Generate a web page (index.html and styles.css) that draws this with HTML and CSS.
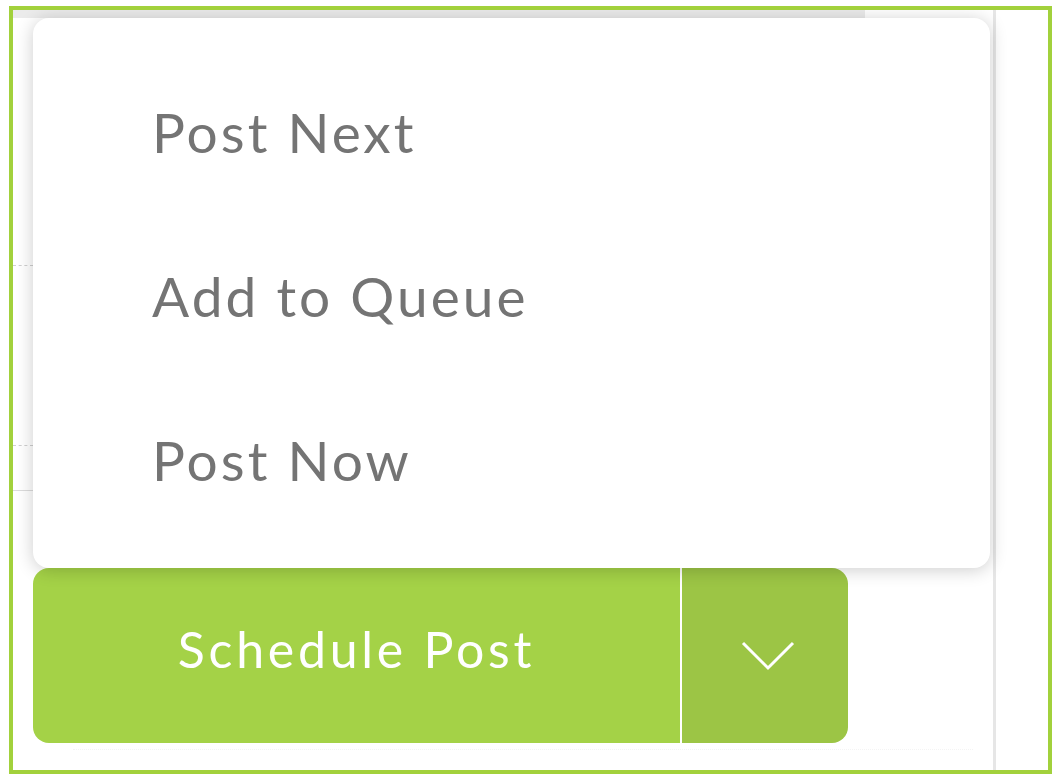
FILE: index.html
```html
<!DOCTYPE html>
<html>
<head>
<meta name="viewport" content="width=device-width, initial-scale=1">
<title>Schedule Post</title>
<link rel="stylesheet" href="styles.css">
</head>
<body>
<div class="frame">
  <div class="stage">
    <div class="panel">
      <div class="top-strip"></div>
      <div class="rule dashed rule-1"></div>
      <div class="rule dashed rule-2"></div>
      <div class="rule solid rule-3"></div>
    </div>

    <div class="split-button">
      <button type="button" class="main-action">Schedule Post</button>
      <button type="button" class="toggle" aria-label="More options">
        <svg width="54" height="30" viewBox="0 0 54 30">
          <polyline points="2,2 27,27 52,2" fill="none" stroke="#ffffff" stroke-width="3"/>
        </svg>
      </button>
    </div>
    <div class="dotted-row"></div>

    <ul class="menu">
      <li>Post Next</li>
      <li>Add to Queue</li>
      <li>Post Now</li>
    </ul>
  </div>
</div>
</body>
</html>
```

FILE: styles.css
```css
body {
  margin: 0;
  background: #ffffff;
  font-family: "Lato", "Open Sans", sans-serif;
}

.frame {
  margin: 6px 0 0 9px;
  width: 1043px;
  height: 768px;
  box-sizing: border-box;
  border: 4px solid #a2d13c;
  overflow: hidden;
}

.stage {
  position: relative;
  height: 100%;
  display: flex;
  flex-direction: column;
}

/* page content lying underneath the menu */
.panel {
  position: absolute;
  left: 0;
  top: 0;
  width: 980px;
  height: 100%;
  border-right: 3px solid #e6e6e6;
}

.top-strip {
  width: 852px;
  height: 8px;
  background: #ebebeb;
}

.rule {
  position: absolute;
  left: 0;
  width: 20px;
}
.rule.dashed {
  border-top: 1px dashed #cfcfcf;
}
.rule.solid {
  border-top: 1px solid #dcdcdc;
}
.rule-1 { top: 255px; }
.rule-2 { top: 435px; }
.rule-3 { top: 480px; }

.split-button {
  position: relative;
  display: flex;
  margin: 558px 0 0 20px;
  width: 815px;
  height: 175px;
  border-radius: 16px;
  overflow: hidden;
}

.split-button button {
  border: none;
  margin: 0;
  padding: 0;
  font-family: inherit;
  cursor: pointer;
}

.main-action {
  width: 647px;
  background: #a4d247;
  color: #ffffff;
  font-size: 50px;
  letter-spacing: 0.075em;
  padding-bottom: 14px !important;
}

.toggle {
  width: 166px;
  margin-left: 2px !important;
  background: #9cc545;
  display: flex;
  align-items: center;
  justify-content: center;
}

.toggle svg {
  display: block;
  margin: 0 0 0 6px;
}

.dotted-row {
  margin: 6px 0 0 60px;
  width: 900px;
  border-top: 1px dotted #f4f4f4;
}

.menu {
  position: absolute;
  left: 20px;
  top: 8px;
  width: 957px;
  height: 550px;
  box-sizing: border-box;
  margin: 0;
  padding: 32px 0 0 119px;
  list-style: none;
  background: #ffffff;
  border-radius: 16px;
  box-shadow: 0 2px 18px rgba(0, 0, 0, 0.2);
}

.menu li {
  height: 164px;
  line-height: 164px;
  font-size: 55px;
  letter-spacing: 0.055em;
  color: #747474;
}
```
